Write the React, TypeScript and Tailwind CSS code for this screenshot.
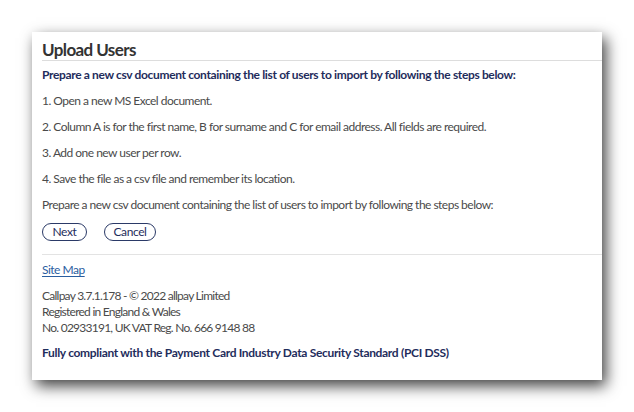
const steps = [
  "1. Open a new MS Excel document.",
  "2. Column A is for the first name, B for surname and C for email address. All fields are required.",
  "3. Add one new user per row.",
  "4. Save the file as a csv file and remember its location.",
];

export default function App() {
  return (
    <div
      className="w-[634px] h-[412px] bg-white pt-[32px] pl-[32px]"
      style={{ fontFamily: "Lato, 'Noto Sans', sans-serif" }}
    >
      <div className="w-[570px] h-[348px] bg-white shadow-[4px_6px_14px_rgba(0,0,0,0.75)] pl-[10px] flex flex-col">
        <h1 className="mt-[9px] h-[18px] leading-[18px] text-[17px] font-bold text-[#333333] tracking-[-0.6px]">
          Upload Users
        </h1>
        <div className="mt-[1px] h-px bg-[#dddddd]" />

        <div className="mt-[6px] flex flex-col gap-[10px] text-[12px] leading-[16px] tracking-[-0.52px] text-[#4a4a4a]">
          <p className="font-bold text-[#1f2d5c] tracking-[-0.35px]">
            Prepare a new csv document containing the list of users to import by following the steps below:
          </p>
          {steps.map((s) => (
            <p key={s}>{s}</p>
          ))}
          <p>Prepare a new csv document containing the list of users to import by following the steps below:</p>
        </div>

        <div className="mt-[10px] flex gap-[17px]">
          <button className="w-[45px] h-[18px] rounded-full border border-[#2b3a67] text-[12px] leading-none text-[#1f2d5c] tracking-[-0.4px]">
            Next
          </button>
          <button className="w-[52px] h-[18px] rounded-full border border-[#2b3a67] text-[12px] leading-none text-[#1f2d5c] tracking-[-0.4px]">
            Cancel
          </button>
        </div>

        <div className="mt-[13px] h-px bg-[#e3e3e3]" />

        <div className="text-[12px] leading-[16px] text-[#4a4a4a]">
          <a href="#" className="block mt-[7px] text-[#2a5d9f] underline underline-offset-2 tracking-[-0.5px]">
            Site Map
          </a>
          <div className="mt-[10px] tracking-[-0.75px]">
            <p>Callpay 3.7.1.178 - © 2022 allpay Limited</p>
            <p>Registered in England &amp; Wales</p>
            <p>No. 02933191, UK VAT Reg. No. 666 9148 88</p>
          </div>
          <p className="mt-[9px] font-bold text-[#1f2d5c] tracking-[-0.32px]">
            Fully compliant with the Payment Card Industry Data Security Standard (PCI DSS)
          </p>
        </div>
      </div>
    </div>
  );
}
